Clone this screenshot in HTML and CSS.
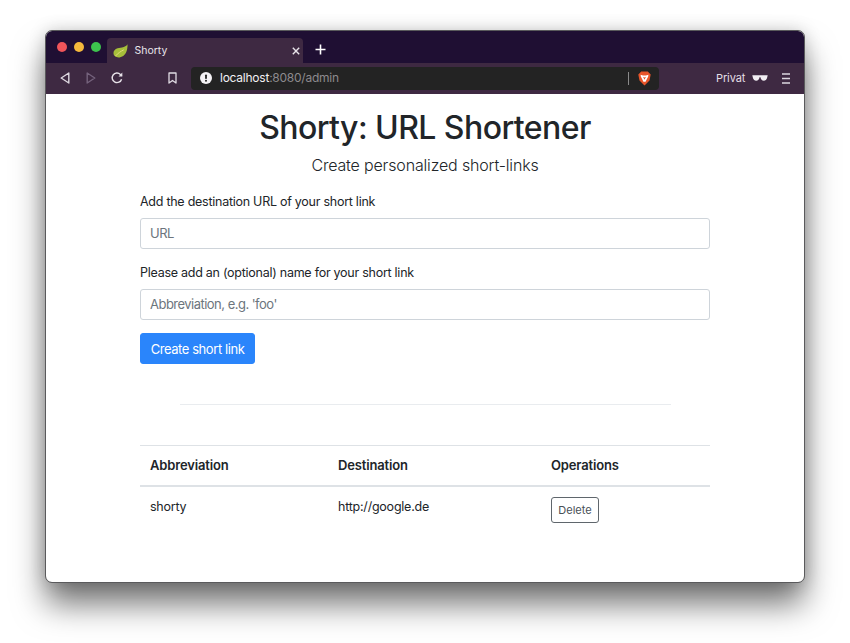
FILE: index.html
```html
<!DOCTYPE html>
<html lang="en">
<head>
<meta charset="utf-8">
<title>Shorty: URL Shortener</title>
<link rel="stylesheet" href="styles.css">
</head>
<body>
<div class="window">
  <div class="tabbar">
    <div class="lights"><span class="light red"></span><span class="light yellow"></span><span class="light green"></span></div>
    <div class="tab">
      <svg class="leaf" width="15" height="14" viewBox="0 0 15 14"><path d="M14.500 0.300C14.800 6.500 12.500 12.800 6.500 13.400C2.800 13.700 0.300 11.800 0.500 8.800C0.800 4.800 5 3.800 9 3.400C11.500 3.100 13.500 2 14.500 0.300Z" fill="#a6bf3a"/><path d="M2.500 12C4.800 9.300 7.800 7.300 10.800 5.800" stroke="#e0dc7a" stroke-width="1" fill="none"/></svg>
      <span class="tab-title">Shorty</span>
      <svg class="tab-close" width="8" height="8" viewBox="0 0 8 8"><path d="M0.800 0.800L7.200 7.200M7.200 0.800L0.800 7.200" stroke="#e8e4ea" stroke-width="1.400"/></svg>
    </div>
    <svg class="new-tab" width="11" height="11" viewBox="0 0 11 11"><path d="M5.500 0.500V10.500M0.500 5.500H10.500" stroke="#fff" stroke-width="1.600"/></svg>
  </div>
  <div class="toolbar">
    <svg class="tool back" width="10" height="12" viewBox="0 0 10 12"><path d="M8.800 1L1.200 6L8.800 11Z" fill="none" stroke="#dcd6df" stroke-width="1.400" stroke-linejoin="round"/></svg>
    <svg class="tool forward" width="10" height="12" viewBox="0 0 10 12"><path d="M1.200 1L8.800 6L1.200 11Z" fill="none" stroke="#74627c" stroke-width="1.400" stroke-linejoin="round"/></svg>
    <svg class="tool reload" width="12" height="12" viewBox="0 0 12 12"><path d="M10.600 7.200A4.800 4.800 0 1 1 9.400 2.400L10.800 3.800" fill="none" stroke="#e6e1e8" stroke-width="1.400"/><path d="M11.300 0.600V4.400H7.500Z" fill="#e6e1e8"/></svg>
    <svg class="tool bookmark" width="9" height="12" viewBox="0 0 9 12"><path d="M1 1H8V11L4.500 8.500L1 11Z" fill="none" stroke="#e0dbe3" stroke-width="1.300" stroke-linejoin="round"/></svg>
    <div class="address">
      <svg class="alert" width="12" height="12" viewBox="0 0 12 12"><circle cx="6" cy="6" r="6" fill="#f4f2f5"/><rect x="5.100" y="2.400" width="1.800" height="4.600" rx="0.800" fill="#222"/><circle cx="6" cy="8.800" r="1" fill="#222"/></svg>
      <span class="url"><span class="host">localhost</span>:8080/admin</span>
      <span class="addr-sep"></span>
      <svg class="brave" width="13" height="15" viewBox="0 0 13 15"><path d="M3.200 0.500H9.800L11.200 2L12.700 3.500L11.500 9.500L6.500 14.500L1.500 9.500L0.300 3.500L1.800 2Z" fill="#e8552a"/><path d="M2.600 3.800L5 4.400H8L10.400 3.800L10.200 5.600L8.400 9L7.600 10.800H5.400L4.600 9L2.800 5.600Z" fill="#fff"/><path d="M5 5.800L6.500 8.800L8 5.800L6.500 6.600Z" fill="#e8552a"/></svg>
    </div>
    <span class="privat">Privat</span>
    <svg class="glasses" width="16" height="6" viewBox="0 0 16 6"><path d="M0.300 0.300H15.700L15.300 2C15 4.400 13.500 5.700 11.800 5.700C10 5.700 8.800 4.200 8.500 2.200H7.500C7.200 4.200 6 5.700 4.200 5.700C2.500 5.700 1 4.400 0.700 2Z" fill="#f1edf3"/></svg>
    <svg class="menu" width="8" height="11" viewBox="0 0 8 11"><path d="M0 1H8M0 5.500H8M0 10H8" stroke="#dcd6df" stroke-width="1.400"/></svg>
  </div>
  <main class="page">
    <div class="container">
      <h1 class="title">Shorty: URL Shortener</h1>
      <p class="lead">Create personalized short-links</p>
      <form class="form">
        <label class="label" for="url">Add the destination URL of your short link</label>
        <input class="input" id="url" type="text" placeholder="URL">
        <label class="label" for="abbr">Please add an (optional) name for your short link</label>
        <input class="input" id="abbr" type="text" placeholder="Abbreviation, e.g. 'foo'">
        <button class="btn-primary" type="button">Create short link</button>
      </form>
      <hr class="rule">
      <table class="table">
        <thead>
          <tr><th class="col-a">Abbreviation</th><th class="col-b">Destination</th><th>Operations</th></tr>
        </thead>
        <tbody>
          <tr><td>shorty</td><td>http://google.de</td><td><button class="btn-outline" type="button">Delete</button></td></tr>
        </tbody>
      </table>
    </div>
  </main>
</div>
</body>
</html>
```
FILE: styles.css
```css
* { box-sizing: border-box; }
html, body { margin: 0; height: 643px; overflow: hidden; background: #fff; }
body {
  padding: 31px 46px 61px;
  font-family: Inter, "Liberation Sans", sans-serif;
  color: #212529;
}
.window {
  height: 551px;
  display: flex;
  flex-direction: column;
  border-radius: 6px;
  overflow: hidden;
  background: #fff;
  outline: 1px solid #5a5a5c;
  box-shadow: 0 22px 32px 0 rgba(0,0,0,.55), 0 0 18px rgba(0,0,0,.2);
}
.tabbar {
  height: 32px;
  flex: none;
  background: #1f0f33;
  display: flex;
  align-items: flex-end;
  padding-left: 11px;
}
.lights { display: flex; gap: 7px; align-self: center; margin-top: -1px; margin-right: 5.500px; }
.light { width: 10px; height: 10px; border-radius: 50%; }
.red { background: #f0555a; }
.yellow { background: #f5b93c; }
.green { background: #3dc34e; }
.tab {
  width: 196px;
  height: 25px;
  background: #3e2942;
  border-radius: 4px 4px 0 0;
  display: flex;
  align-items: center;
  padding: 0 3px 0 6px;
  color: #e8e4ea;
  font-size: 10.500px;
}
.leaf { flex: none; margin-right: 7px; }
.tab-title { flex: 1; }
.tab-close { flex: none; }
.new-tab { margin: 0 0 8px 12px; }
.toolbar {
  height: 31px;
  flex: none;
  background: #3e2942;
  display: flex;
  align-items: center;
  padding: 0 0 1px 14px;
}
.tool { flex: none; }
.forward { margin-left: 16px; }
.reload { margin-left: 15px; }
.bookmark { margin-left: 45px; }
.address {
  width: 468px;
  height: 23px;
  margin-left: 14px;
  background: #232323;
  border-radius: 4px;
  display: flex;
  align-items: center;
  padding: 0 8px 0 9px;
  font-size: 12px;
  letter-spacing: -0.020em;
  color: #8d8a8e;
}
.alert { flex: none; margin-right: 8px; }
.url { flex: 1; padding-bottom: 1px; }
.host { color: #f2f0f3; }
.addr-sep { width: 1px; height: 13px; background: #8a8a8a; margin-right: 9px; }
.brave { flex: none; }
.privat { margin-left: 57px; color: #e4dfe6; font-size: 11px; letter-spacing: -0.010em; }
.glasses { margin-left: 7px; flex: none; }
.menu { margin-left: 14px; flex: none; }
.page { flex: 1; background: #fff; }
.container { width: 570px; margin: 0 auto; }
.title {
  margin: 14px 0 0;
  text-align: center;
  font-size: 32px;
  line-height: 40px;
  font-weight: 550;
  letter-spacing: -0.560px;
}
.lead {
  margin: 5px 0 0;
  text-align: center;
  font-size: 16px;
  line-height: 24px;
  font-weight: 300;
  letter-spacing: -0.160px;
}
.form { display: flex; flex-direction: column; align-items: stretch; margin-top: 14px; }
.label { font-size: 12.500px; line-height: 21px; margin-bottom: 6px; letter-spacing: -0.260px; }
.input {
  height: 31px;
  margin-bottom: 13px;
  border: 1px solid #ced4da;
  border-radius: 3px;
  padding: 0 9px 2px;
  font: inherit;
  font-size: 13px;
  letter-spacing: -0.520px;
  color: #495057;
}
.input::placeholder { color: #6c757d; opacity: 1; }
.btn-primary {
  align-self: flex-start;
  height: 31px;
  width: 115px;
  padding: 0;
  border: 1px solid #2a85fb;
  border-radius: 3px;
  background: #2a85fb;
  color: #fff;
  font: inherit;
  font-size: 13px;
  letter-spacing: -0.430px;
}
.rule { width: 491px; margin: 40px auto 40px; border: 0; border-top: 1px solid #e9ecef; }
.table { width: 100%; border-collapse: collapse; font-size: 12.500px; }
.table th {
  text-align: left;
  font-weight: 600;
  font-size: 13px;
  letter-spacing: -0.150px;
  height: 40px;
  padding: 0 10px;
  border-top: 1px solid #dee2e6;
  border-bottom: 2px solid #dee2e6;
}
.col-a { width: 188px; }
.col-b { width: 213px; }
.table td { padding: 10px 10px; vertical-align: top; line-height: 20px; letter-spacing: -0.230px; }
.btn-outline {
  height: 26px;
  width: 48px;
  padding: 1px 0 0;
  background: #fff;
  border: 1px solid #5f666c;
  border-radius: 3px;
  font: inherit;
  font-size: 11px;
  color: #495057;
}
```
